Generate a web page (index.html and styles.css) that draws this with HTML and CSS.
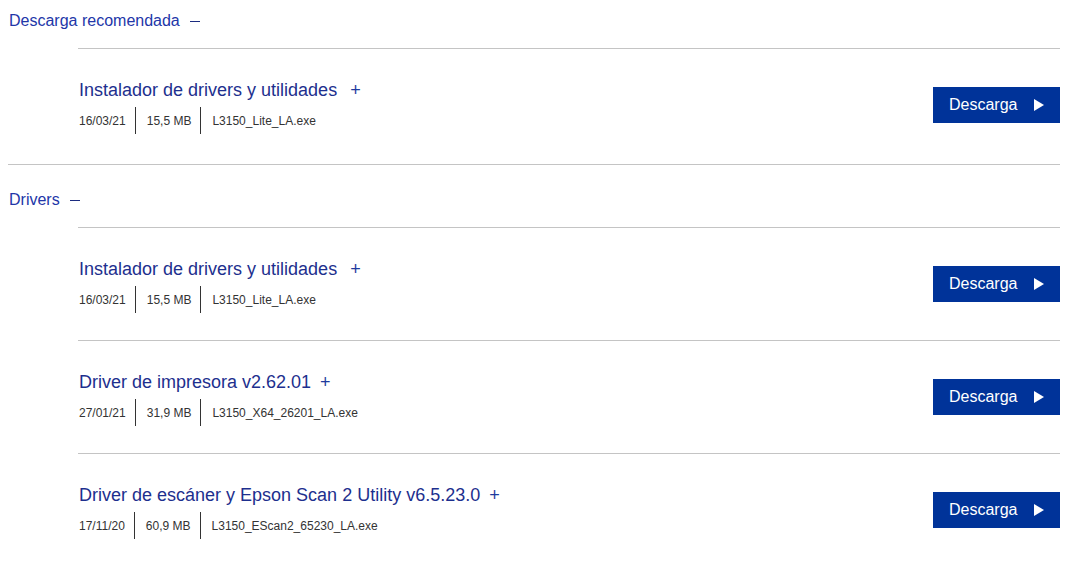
FILE: index.html
```html
<!DOCTYPE html>
<html lang="es">
<head>
<meta charset="utf-8">
<title>Descargas</title>
<link rel="stylesheet" href="styles.css">
</head>
<body>
<div class="page">
  <section class="group">
    <h2 class="group-head">Descarga recomendada <span class="minus"></span></h2>
    <ul class="items">
      <li class="item">
        <div class="info">
          <h3 class="title">Instalador de drivers y utilidades<span class="plus wide">+</span></h3>
          <div class="meta"><span class="m">16/03/21</span><span class="m">15,5 MB</span><span class="m">L3150_Lite_LA.exe</span></div>
        </div>
        <a class="btn" href="#">Descarga<span class="tri"></span></a>
      </li>
    </ul>
  </section>
  <section class="group second">
    <h2 class="group-head">Drivers <span class="minus"></span></h2>
    <ul class="items">
      <li class="item">
        <div class="info">
          <h3 class="title">Instalador de drivers y utilidades<span class="plus wide">+</span></h3>
          <div class="meta"><span class="m">16/03/21</span><span class="m">15,5 MB</span><span class="m">L3150_Lite_LA.exe</span></div>
        </div>
        <a class="btn" href="#">Descarga<span class="tri"></span></a>
      </li>
      <li class="item">
        <div class="info">
          <h3 class="title">Driver de impresora v2.62.01<span class="plus">+</span></h3>
          <div class="meta"><span class="m">27/01/21</span><span class="m">31,9 MB</span><span class="m">L3150_X64_26201_LA.exe</span></div>
        </div>
        <a class="btn" href="#">Descarga<span class="tri"></span></a>
      </li>
      <li class="item">
        <div class="info">
          <h3 class="title">Driver de escáner y Epson Scan 2 Utility v6.5.23.0<span class="plus">+</span></h3>
          <div class="meta"><span class="m">17/11/20</span><span class="m">60,9 MB</span><span class="m">L3150_EScan2_65230_LA.exe</span></div>
        </div>
        <a class="btn" href="#">Descarga<span class="tri"></span></a>
      </li>
    </ul>
  </section>
</div>
</body>
</html>
```
FILE: styles.css
```css
* { box-sizing: border-box; }
html, body { margin: 0; padding: 0; background: #fff; }
body {
  font-family: "Liberation Sans", Arial, sans-serif;
  color: #333;
}
.page {
  padding: 0 7px 0 8px;
}
.group {
  border-bottom: 1px solid #c4c4c4;
  padding-bottom: 3px;
}
.group.second {
  border-bottom: none;
  padding-top: 14px;
}
.group-head {
  margin: 0;
  padding: 11px 0 17px 1px;
  font-size: 16px;
  line-height: 20px;
  font-weight: normal;
  color: #2236a8;
  display: flex;
  align-items: center;
}
.minus {
  display: inline-block;
  width: 10px;
  height: 1px;
  background: #1c2c80;
  margin-left: 10px;
}
.items {
  list-style: none;
  margin: 0 0 0 70px;
  padding: 0;
}
.item {
  border-top: 1px solid #c4c4c4;
  padding: 29px 0 27px 1px;
  display: flex;
  align-items: flex-start;
  justify-content: space-between;
}
.title {
  margin: 0;
  font-size: 18px;
  line-height: 24px;
  font-weight: normal;
  color: #1d2f8e;
}
.plus {
  margin-left: 9px;
  color: #1e3a9e;
}
.plus.wide {
  margin-left: 13px;
}
.meta {
  margin-top: 5px;
  display: flex;
  height: 27px;
  align-items: center;
  font-size: 12px;
  color: #333;
}
.m {
  display: flex;
  align-items: center;
  height: 27px;
  padding: 0 9px 0 11px;
  border-left: 1px solid #333;
}
.m:first-child {
  border-left: none;
  padding-left: 0;
}
.btn {
  margin-top: 9px;
  width: 127px;
  height: 36px;
  background: #003399;
  color: #fff;
  text-decoration: none;
  font-size: 16px;
  display: flex;
  align-items: center;
  justify-content: space-between;
  padding: 0 16px;
}
.tri {
  width: 0;
  height: 0;
  border-top: 6px solid transparent;
  border-bottom: 6px solid transparent;
  border-left: 10px solid #fff;
}
```
